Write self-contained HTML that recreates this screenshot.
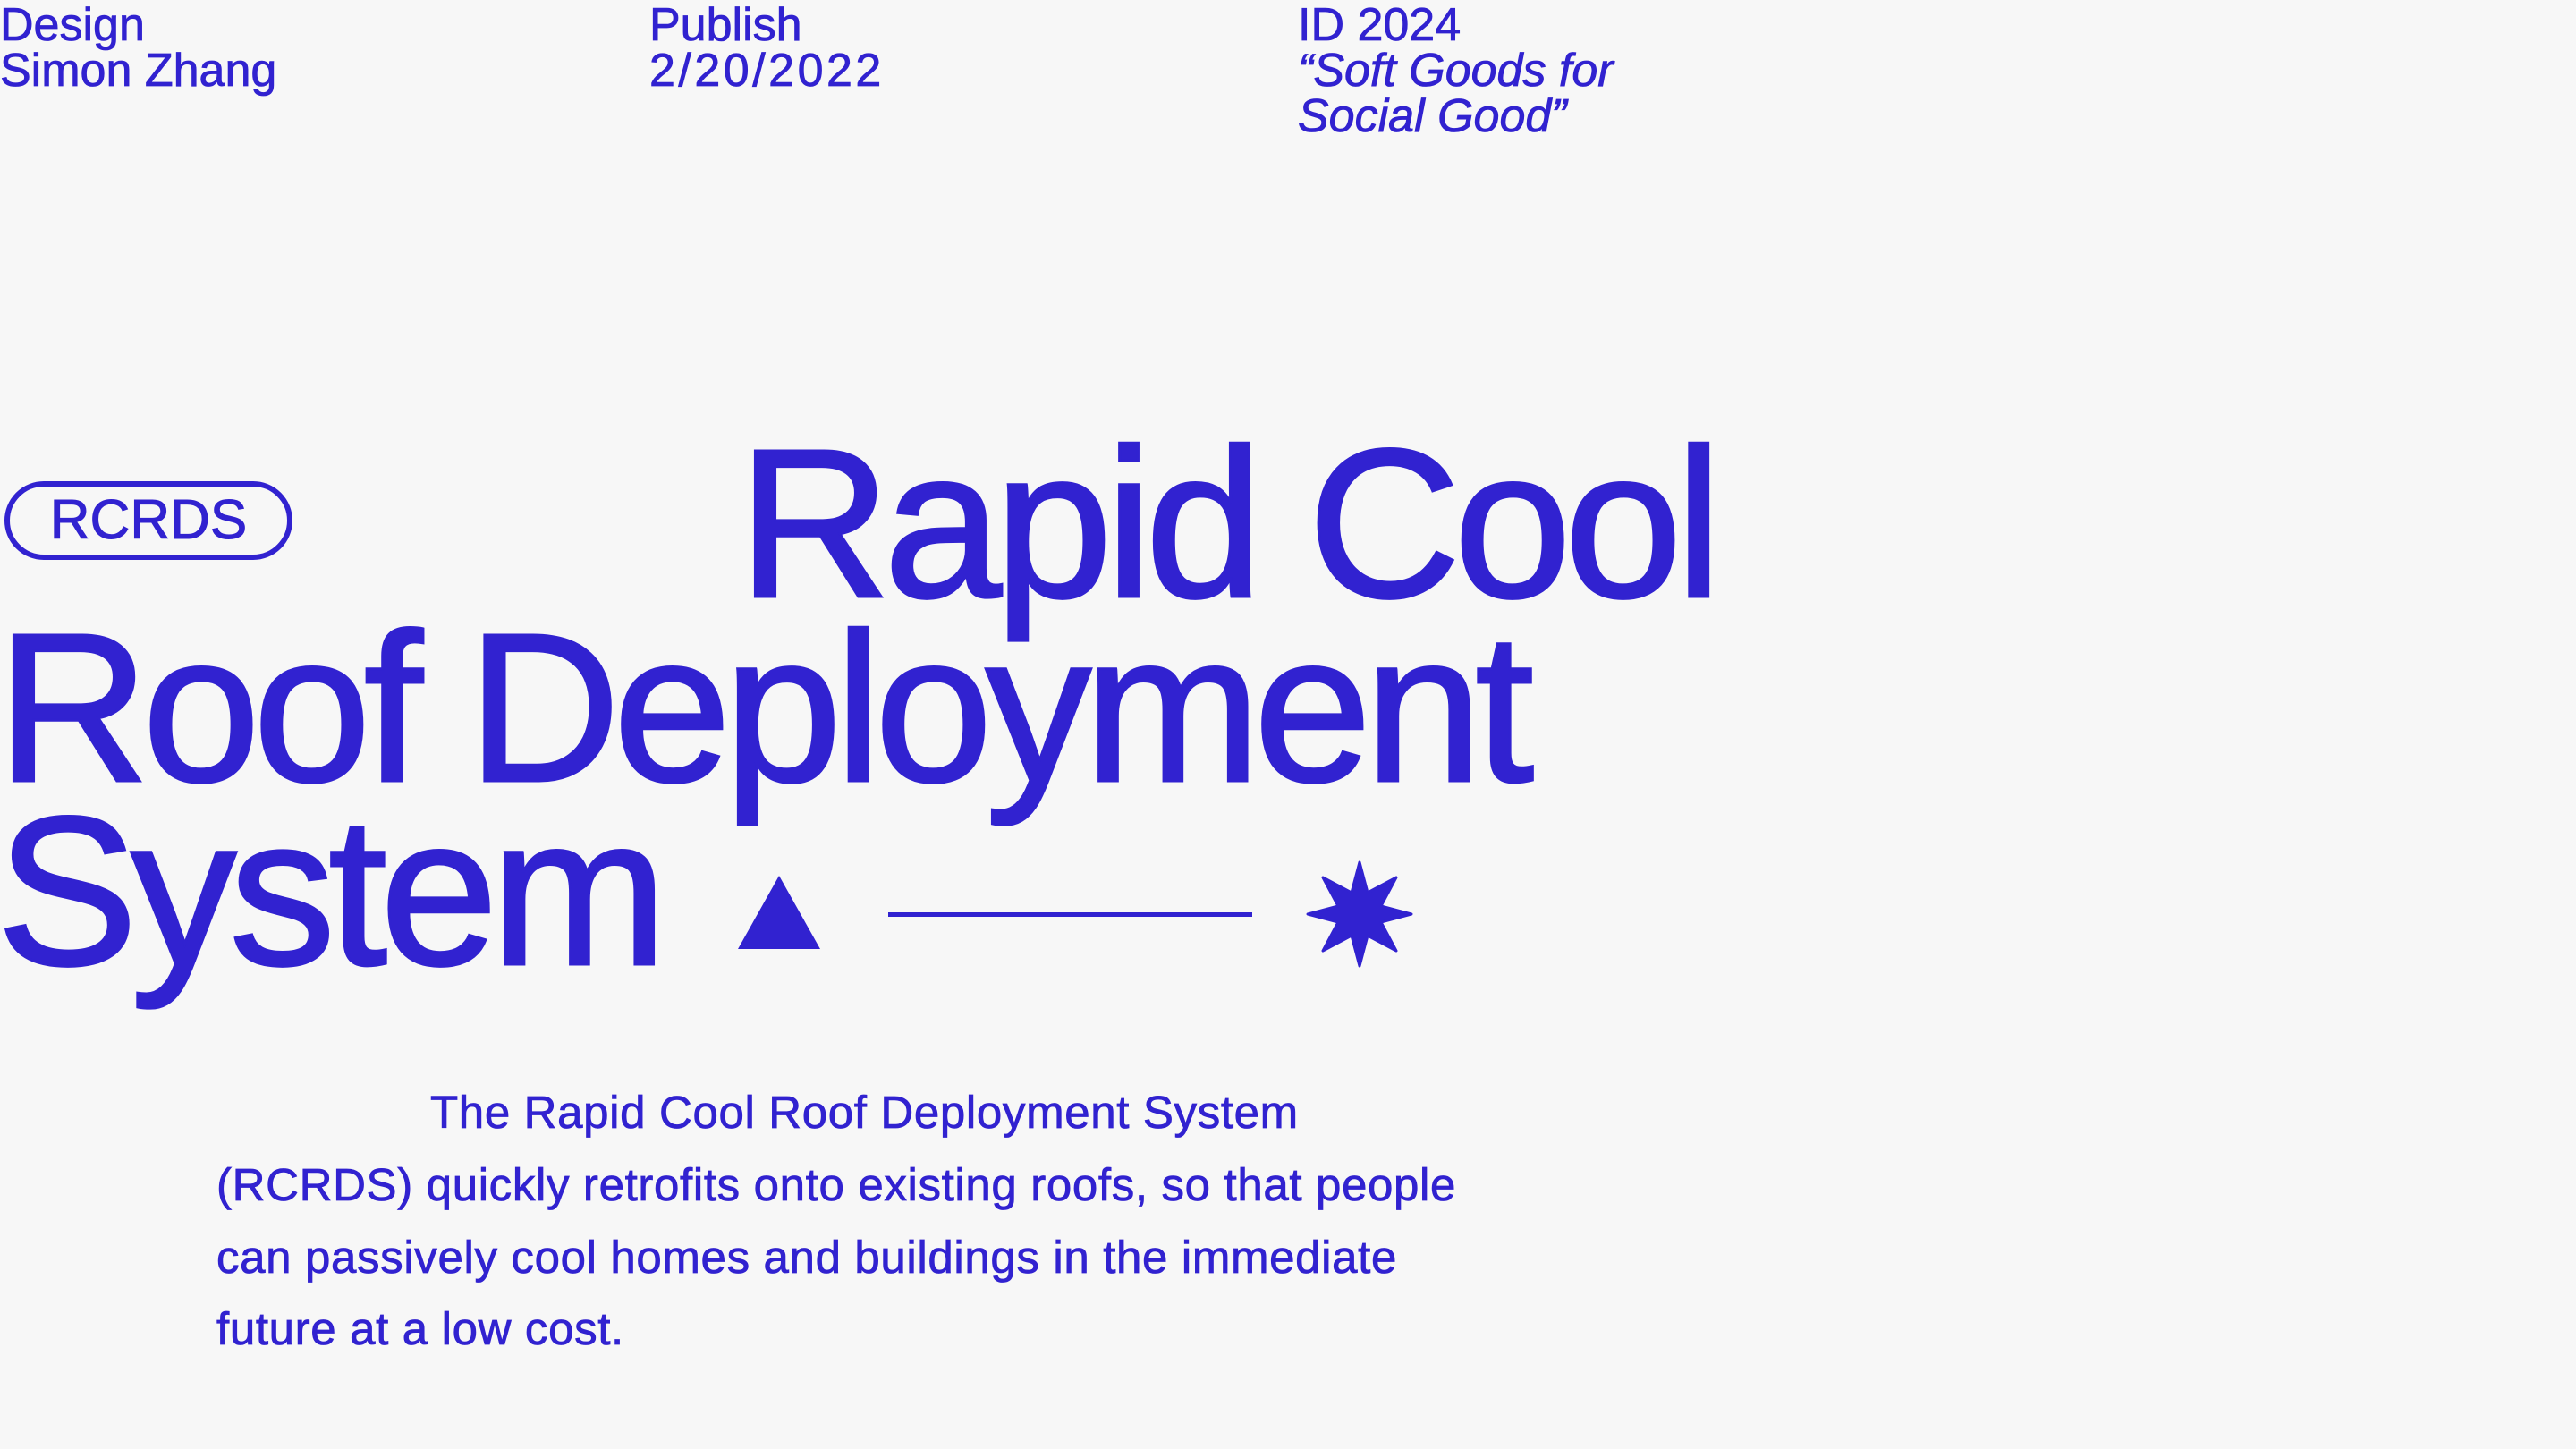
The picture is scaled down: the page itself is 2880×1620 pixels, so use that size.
<!DOCTYPE html>
<html><head><meta charset="utf-8"><style>
html,body{margin:0;padding:0;background:#f7f7f7;}
body{width:2880px;height:1620px;position:relative;overflow:hidden;font-family:"Liberation Sans",Arial,sans-serif;color:#3122d0;}
.h{position:absolute;top:3px;font-size:52px;line-height:51px;white-space:nowrap;-webkit-text-stroke:0.8px #3122d0;}
.t{position:absolute;font-size:237px;line-height:237px;letter-spacing:-8px;white-space:nowrap;-webkit-text-stroke:3px #3122d0;}
.p{position:absolute;left:242px;font-size:51px;line-height:81px;white-space:nowrap;letter-spacing:0.65px;-webkit-text-stroke:0.8px #3122d0;}
.pill{position:absolute;left:5px;top:538px;width:310px;height:76px;border:6px solid #3122d0;border-radius:50px;font-size:62px;line-height:76px;text-align:center;-webkit-text-stroke:1px #3122d0;}
</style></head><body>
<div class="h" style="left:0">Design<br>Simon Zhang</div>
<div class="h" style="left:726px">Publish<br><span style="letter-spacing:3.5px">2/20/2022</span></div>
<div class="h" style="left:1451px">ID 2024<br><i>“Soft Goods for<br>Social Good”</i></div>
<div class="pill">RCRDS</div>
<div class="t" style="left:825px;top:467px">Rapid Cool</div>
<div class="t" style="left:-4px;top:673px">Roof Deployment</div>
<div class="t" style="left:-4px;top:878px">System</div>
<svg style="position:absolute;left:0;top:0" width="2880" height="1620">
<polygon points="825,1061 917,1061 871,979" fill="#3122d0"/>
<rect x="993" y="1020" width="407" height="5" fill="#3122d0"/>
<polygon fill="#3122d0" stroke="#3122d0" stroke-width="3" stroke-linejoin="round" points="
1520,964 1529,998 1561,981 1544,1013 1578,1022 1544,1031 1561,1063 1529,1046 1520,1080 1511,1046 1479,1063 1496,1031 1462,1022 1496,1013 1479,981 1511,998"/>
</svg>
<div class="p" style="top:1203px;left:481px">The Rapid Cool Roof Deployment System</div>
<div class="p" style="top:1284px">(RCRDS) quickly retrofits onto existing roofs, so that people</div>
<div class="p" style="top:1365px">can passively cool homes and buildings in the immediate</div>
<div class="p" style="top:1445px">future at a low cost.</div>
</body></html>
